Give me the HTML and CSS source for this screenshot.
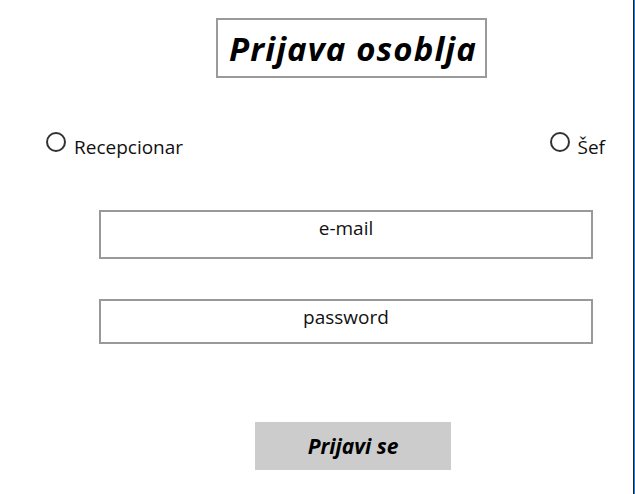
FILE: index.html
```html
<!DOCTYPE html>
<html>
<head>
<meta charset="utf-8">
<link rel="stylesheet" href="styles.css">
</head>
<body>
<div class="window">
  <div class="title-row">
    <h1 class="title">Prijava osoblja</h1>
  </div>
  <div class="role-row">
    <label class="radio"><span class="dot"></span><span class="radio-text">Recepcionar</span></label>
    <label class="radio"><span class="dot"></span><span class="radio-text">Šef</span></label>
  </div>
  <div class="field field-email">e-mail</div>
  <div class="field field-pass">password</div>
  <div class="button-row">
    <button class="login">Prijavi se</button>
  </div>
</div>
</body>
</html>
```
FILE: styles.css
```css
html {
  background: #2b7bd3;
}
body {
  margin: 0;
  width: 635px;
  height: 494px;
  background: #2b7bd3;
  font-family: "Open Sans", "Noto Sans", sans-serif;
  color: #111;
}
.window {
  width: 633px;
  height: 494px;
  background: #fff;
  border-right: 1px solid #1f2226;
  display: flex;
  flex-direction: column;
  overflow: hidden;
}
.title-row {
  display: flex;
  padding-top: 18px;
  padding-left: 216px;
}
.title {
  margin: 0;
  box-sizing: border-box;
  width: 271px;
  height: 60px;
  border: 2px solid #9a9a9a;
  font-size: 33px;
  font-weight: 700;
  font-style: italic;
  display: flex;
  align-items: center;
  justify-content: center;
  letter-spacing: 1.1px;
  padding-left: 3px;
  color: #000;
}
.role-row {
  display: flex;
  justify-content: space-between;
  padding: 0 28px 0 46px;
  margin-top: 54px;
}
.radio {
  display: flex;
  align-items: flex-start;
  gap: 8px;
}
.dot {
  box-sizing: border-box;
  width: 20px;
  height: 20px;
  border: 2px solid #333;
  border-radius: 50%;
  flex: none;
}
.radio-text {
  font-size: 19px;
  line-height: 20px;
  margin-top: 5px;
  color: #111;
}
.field {
  box-sizing: border-box;
  margin-left: 99px;
  width: 494px;
  border: 2px solid #999;
  text-align: center;
  font-size: 19px;
  line-height: 24px;
  padding-top: 4px;
  color: #111;
}
.field-email {
  margin-top: 53px;
  height: 49px;
}
.field-pass {
  margin-top: 40px;
  height: 45px;
}
.button-row {
  display: flex;
  padding-left: 255px;
  margin-top: 78px;
}
.login {
  width: 196px;
  height: 48px;
  border: none;
  background: #cccccc;
  font-family: "Open Sans", "Noto Sans", sans-serif;
  font-size: 21px;
  font-weight: 700;
  font-style: italic;
  color: #000;
  padding: 0;
}
```
